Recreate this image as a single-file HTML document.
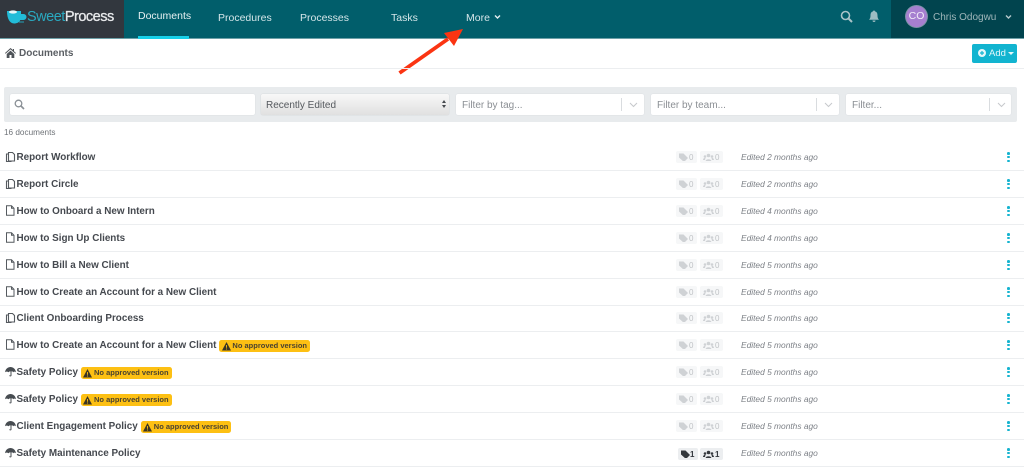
<!DOCTYPE html>
<html><head><meta charset="utf-8"><style>
html,body{margin:0;padding:0;width:1024px;height:470px;overflow:hidden;background:#fff;font-family:"Liberation Sans",sans-serif}
.a{position:absolute;white-space:nowrap}
.nav{top:11px;font-size:10.5px;line-height:14px;color:#d5e6e9}
.box{position:absolute;top:94px;height:21px;background:#fff;border-radius:2px;box-shadow:0 0 1px #c8ced3}
.ph{position:absolute;left:6px;top:5px;font-size:10px;line-height:14px;color:#8b8f94;white-space:nowrap}
.sep{position:absolute;top:4px;width:1px;height:13px;background:#d9dcdf}
.row{position:absolute;left:0;width:1024px;height:1px;background:#eceef0}
.t{position:absolute;left:16.5px;margin-top:1px;font-size:9.9px;line-height:14px;font-weight:bold;color:#45494f;white-space:nowrap}
.ic{position:absolute;left:5px}
.b{display:inline-block;position:relative;vertical-align:0;margin-left:3px;height:11.5px;line-height:11.5px;background:#fdc013;border-radius:2.5px;padding:0 3px 0 13px;font-size:7.5px;font-weight:bold;color:#4a4230}
.b svg{position:absolute;left:2.5px;top:1.5px}
.pill{position:absolute;height:12px;border-radius:2px;background:#f6f7f8;font-size:8px;line-height:12px;color:#c0c3c6}
.p1{left:676px;width:21px}.p2{left:700px;width:23px}
.pill svg{position:absolute;left:2.5px;top:2px}
.p2 svg{left:3px}
.pill span{position:absolute;right:3.5px;top:1px}
.e{position:absolute;left:741px;font-size:8.4px;line-height:12px;font-style:italic;color:#7d8187;white-space:nowrap}
.d{position:absolute;left:1007px;width:3px;height:11px}
.d i{display:block;width:2.6px;height:2.6px;border-radius:50%;background:#16b4d0;margin-bottom:1.2px}
</style></head><body>
<div class="a" style="left:0;top:0;width:1024px;height:38px;background:#015e6b"></div>
<div class="a" style="left:0;top:0;width:124px;height:38px;background:#32373e"></div>
<div class="a" style="left:891px;top:0;width:133px;height:38px;background:#01444e"></div>
<div class="a" style="left:0;top:38px;width:1024px;height:1px;background:#6da0a8"></div>
<svg class="a" style="left:5px;top:8px" width="22" height="18" viewBox="0 0 22 18"><path d="M2 3h14v3h2.500a2.500 2.500 0 0 1 0 6h-3.200C14 14.500 12 15.500 9 15.500 5 15.500 2 11 2 3z" fill="#22bcd8"/><ellipse cx="8" cy="4" rx="4" ry="1.600" fill="#e8f6f8"/><path d="M14 14h5" stroke="#22a3bb" fill="none"/></svg>
<div class="a" style="left:27px;top:8px;font-size:14.5px;line-height:18px;letter-spacing:-.5px;color:#fff"><span style="color:#2aa9c0">Sweet</span><span style="color:#e8eaec;-webkit-text-stroke:.3px #e8eaec">Process</span></div>
<div class="a nav" style="left:138px;top:9px;color:#e6f0f2">Documents</div>
<div class="a" style="left:138px;top:36px;width:51px;height:3px;background:#17d0e8"></div>
<div class="a nav" style="left:218px">Procedures</div>
<div class="a nav" style="left:300px">Processes</div>
<div class="a nav" style="left:391px">Tasks</div>
<div class="a nav" style="left:466px">More</div>
<svg class="a" style="left:493.5px;top:14px" width="7" height="6" viewBox="0 0 7 6"><path d="M1 1.500l2.500 2.500 2.500-2.500" stroke="#e4eef0" stroke-width="1.400" fill="none"/></svg>
<svg class="a" style="left:840px;top:10px" width="13" height="13" viewBox="0 0 13 13"><circle cx="5.500" cy="5.500" r="4" stroke="#a9c3c8" stroke-width="1.600" fill="none"/><path d="M8.500 8.500l3.500 3.500" stroke="#a9c3c8" stroke-width="2"/></svg>
<svg class="a" style="left:868px;top:10px" width="12" height="13" viewBox="0 0 12 13"><path d="M6 .5c.6 0 1 .4 1 .9C9 2 9.500 3.500 9.500 5.500c0 2.500.8 3.500 1.500 4.300H1c.7-.8 1.500-1.800 1.500-4.300C2.500 3.500 3 2 5 1.400c0-.5.400-.9 1-.9zM4.500 10.500h3a1.500 1.500 0 0 1-3 0z" fill="#9dbcc2"/></svg>
<div class="a" style="left:906px;top:6px;width:21px;height:21px;border-radius:50%;background:#a67fd0;color:#f2ecf8;font-size:10.5px;line-height:21px;text-align:center;box-shadow:0 0 0 1px #7f93a8">CO</div>
<div class="a" style="left:933px;top:11px;font-size:10px;line-height:14px;color:#9fb6ba">Chris Odogwu</div>
<svg class="a" style="left:1005px;top:14px" width="7" height="6" viewBox="0 0 7 6"><path d="M1 1.500l2.500 2.500 2.500-2.500" stroke="#b6c9cc" stroke-width="1.400" fill="none"/></svg>

<svg class="a" style="left:398px;top:28px" width="70" height="48" viewBox="0 0 70 48"><path d="M1.500 45L50 11" stroke="#fb3412" stroke-width="3.800" fill="none"/><path d="M65 1L46 5 56 18z" fill="#fb3412"/></svg>

<svg class="a" style="left:5px;top:48px" width="11" height="10" viewBox="0 0 11 10"><path d="M5.500 0L0 5l.6.7L5.500 1.400l4.900 4.300.6-.7-2-1.800V1H8v1zM1.700 6v4h2.800V7h2v3h2.800V6L5.500 2.600z" fill="#4f5459"/></svg>
<div class="a" style="left:19px;top:47px;font-size:10px;line-height:14px;font-weight:bold;color:#5a5e63">Documents</div>
<div class="a" style="left:972px;top:43.5px;width:45px;height:19px;border-radius:2px;background:#12b4d0"></div>
<svg class="a" style="left:978px;top:49px" width="8" height="8" viewBox="0 0 8 8"><circle cx="4" cy="4" r="4" fill="#e6f7fa"/><path d="M4 2v4M2 4h4" stroke="#12b4d0" stroke-width="1.200"/></svg>
<div class="a" style="left:989px;top:46.5px;font-size:9.5px;line-height:14px;color:#e6f7fa">Add</div>
<div class="a" style="left:1008px;top:52px;width:0;height:0;border:3px solid transparent;border-top-color:#e6f7fa;border-bottom:0"></div>
<div class="a" style="left:0;top:68px;width:1024px;height:1px;background:#eceef0"></div>

<div class="a" style="left:4px;top:87px;width:1013px;height:35px;background:#e8ebed;border-radius:2px"></div>
<div class="box" style="left:10px;width:245px"></div>
<svg class="a" style="left:14px;top:99px" width="11" height="11" viewBox="0 0 11 11"><circle cx="4.500" cy="4.500" r="3.300" stroke="#8a9096" stroke-width="1.300" fill="none"/><path d="M7 7l3 3" stroke="#8a9096" stroke-width="1.600"/></svg>
<div class="a" style="left:261px;top:94px;width:188px;height:21px;border-radius:2px;background:linear-gradient(#f8f8f8,#e0e0e0);box-shadow:0 0 1px #b8bcc0"></div>
<div class="a" style="left:266px;top:99px;font-size:10px;line-height:14px;color:#55595e">Recently Edited</div>
<div class="a" style="left:442px;top:100px;width:0;height:0;border:2.5px solid transparent;border-bottom:3px solid #44484d;border-top:0"></div>
<div class="a" style="left:442px;top:105px;width:0;height:0;border:2.5px solid transparent;border-top:3px solid #44484d;border-bottom:0"></div>
<div class="box" style="left:456px;width:188px"><div class="ph">Filter by tag...</div><div class="sep" style="left:165px"></div><svg style="position:absolute;left:173px;top:8px" width="9" height="6"><path d="M1 1l3.500 3.500L8 1" stroke="#c6c9cc" fill="none"/></svg></div>
<div class="box" style="left:651px;width:188px"><div class="ph">Filter by team...</div><div class="sep" style="left:165px"></div><svg style="position:absolute;left:173px;top:8px" width="9" height="6"><path d="M1 1l3.500 3.500L8 1" stroke="#c6c9cc" fill="none"/></svg></div>
<div class="box" style="left:846px;width:165px"><div class="ph">Filter...</div><div class="sep" style="left:143px"></div><svg style="position:absolute;left:151px;top:8px" width="9" height="6"><path d="M1 1l3.500 3.500L8 1" stroke="#c6c9cc" fill="none"/></svg></div>
<div class="a" style="left:4px;top:127px;font-size:8.2px;line-height:12px;color:#6f7378">16 documents</div>

<svg width="0" height="0" style="position:absolute"><defs>
<g id="cp"><path d="M3.500 1.500h4l2 2v6.500h-6zM3.500 3H1.500v7.500h5" stroke="#555a5f" stroke-width="1.100" fill="none"/></g>
<g id="dc"><path d="M1.500.8h5l2.500 2.500v7H1.500zM6.500.8v2.500H9" stroke="#555a5f" stroke-width="1" fill="none"/></g>
<g id="um"><path d="M0 6.200C.5 2.800 3 1 5.500 1S10.500 2.800 11 6.200c-1-.8-2-.8-2.700 0-.5-.6-1-.8-1.800-.8v4.100c0 1-1.600 1.300-2.400.3l.7-.5c.2.300.7.200.7 0V5.400c-.8 0-1.300.2-1.800.8C2 5.400 1 5.400 0 6.200z" fill="#474c51"/></g>
<g id="tg"><path d="M0 .5h4.500L9 5 5 9 0 4.500z"/></g>
<g id="us"><circle cx="5.500" cy="2.500" r="1.800"/><circle cx="2" cy="3.500" r="1.300"/><circle cx="9" cy="3.500" r="1.300"/><path d="M2.500 8.500c0-3 6-3 6 0zM0 7c0-2 2-2.500 2.500-2L2 7zM11 7c0-2-2-2.500-2.500-2L9 7z"/></g>
<g id="wr"><path d="M4.500 0L9 8.500H0z" fill="#3b3524"/><path d="M4.500 3v2.800M4.500 6.500v1" stroke="#fdc013" stroke-width=".9"/></g>
</defs></svg>

<div class="row" style="top:170px"></div><div class="row" style="top:197px"></div><div class="row" style="top:224px"></div><div class="row" style="top:251px"></div><div class="row" style="top:278px"></div><div class="row" style="top:305px"></div><div class="row" style="top:331px"></div><div class="row" style="top:358px"></div><div class="row" style="top:385px"></div><div class="row" style="top:412px"></div><div class="row" style="top:439px"></div><div class="row" style="top:466px"></div>

<svg class="ic" style="top:151px" width="11" height="12"><use href="#cp"/></svg><div class="t" style="top:150px">Report Workflow</div>
<svg class="ic" style="top:178px" width="11" height="12"><use href="#cp"/></svg><div class="t" style="top:177px">Report Circle</div>
<svg class="ic" style="top:205px" width="11" height="12"><use href="#dc"/></svg><div class="t" style="top:204px">How to Onboard a New Intern</div>
<svg class="ic" style="top:232px" width="11" height="12"><use href="#dc"/></svg><div class="t" style="top:231px">How to Sign Up Clients</div>
<svg class="ic" style="top:259px" width="11" height="12"><use href="#dc"/></svg><div class="t" style="top:258px">How to Bill a New Client</div>
<svg class="ic" style="top:286px" width="11" height="12"><use href="#dc"/></svg><div class="t" style="top:285px">How to Create an Account for a New Client</div>
<svg class="ic" style="top:312px" width="11" height="12"><use href="#cp"/></svg><div class="t" style="top:311px">Client Onboarding Process</div>
<svg class="ic" style="top:339px" width="11" height="12"><use href="#dc"/></svg><div class="t" style="top:338px">How to Create an Account for a New Client<span class="b"><svg width="9" height="9"><use href="#wr"/></svg>No approved version</span></div>
<svg class="ic" style="top:366px" width="11" height="12"><use href="#um"/></svg><div class="t" style="top:365px">Safety Policy<span class="b"><svg width="9" height="9"><use href="#wr"/></svg>No approved version</span></div>
<svg class="ic" style="top:393px" width="11" height="12"><use href="#um"/></svg><div class="t" style="top:392px">Safety Policy<span class="b"><svg width="9" height="9"><use href="#wr"/></svg>No approved version</span></div>
<svg class="ic" style="top:420px" width="11" height="12"><use href="#um"/></svg><div class="t" style="top:419px">Client Engagement Policy<span class="b"><svg width="9" height="9"><use href="#wr"/></svg>No approved version</span></div>
<svg class="ic" style="top:447px" width="11" height="12"><use href="#um"/></svg><div class="t" style="top:446px">Safety Maintenance Policy</div>

<div class="pill p1" style="top:151px"><svg width="10" height="8" fill="#cfd2d5"><use href="#tg"/></svg><span>0</span></div><div class="pill p2" style="top:151px"><svg width="11" height="8" fill="#cfd2d5"><use href="#us"/></svg><span>0</span></div><div class="e" style="top:151px">Edited 2 months ago</div><div class="d" style="top:152px"><i></i><i></i><i></i></div>
<div class="pill p1" style="top:178px"><svg width="10" height="8" fill="#cfd2d5"><use href="#tg"/></svg><span>0</span></div><div class="pill p2" style="top:178px"><svg width="11" height="8" fill="#cfd2d5"><use href="#us"/></svg><span>0</span></div><div class="e" style="top:178px">Edited 2 months ago</div><div class="d" style="top:179px"><i></i><i></i><i></i></div>
<div class="pill p1" style="top:205px"><svg width="10" height="8" fill="#cfd2d5"><use href="#tg"/></svg><span>0</span></div><div class="pill p2" style="top:205px"><svg width="11" height="8" fill="#cfd2d5"><use href="#us"/></svg><span>0</span></div><div class="e" style="top:205px">Edited 4 months ago</div><div class="d" style="top:206px"><i></i><i></i><i></i></div>
<div class="pill p1" style="top:232px"><svg width="10" height="8" fill="#cfd2d5"><use href="#tg"/></svg><span>0</span></div><div class="pill p2" style="top:232px"><svg width="11" height="8" fill="#cfd2d5"><use href="#us"/></svg><span>0</span></div><div class="e" style="top:232px">Edited 4 months ago</div><div class="d" style="top:233px"><i></i><i></i><i></i></div>
<div class="pill p1" style="top:259px"><svg width="10" height="8" fill="#cfd2d5"><use href="#tg"/></svg><span>0</span></div><div class="pill p2" style="top:259px"><svg width="11" height="8" fill="#cfd2d5"><use href="#us"/></svg><span>0</span></div><div class="e" style="top:259px">Edited 5 months ago</div><div class="d" style="top:260px"><i></i><i></i><i></i></div>
<div class="pill p1" style="top:286px"><svg width="10" height="8" fill="#cfd2d5"><use href="#tg"/></svg><span>0</span></div><div class="pill p2" style="top:286px"><svg width="11" height="8" fill="#cfd2d5"><use href="#us"/></svg><span>0</span></div><div class="e" style="top:286px">Edited 5 months ago</div><div class="d" style="top:287px"><i></i><i></i><i></i></div>
<div class="pill p1" style="top:312px"><svg width="10" height="8" fill="#cfd2d5"><use href="#tg"/></svg><span>0</span></div><div class="pill p2" style="top:312px"><svg width="11" height="8" fill="#cfd2d5"><use href="#us"/></svg><span>0</span></div><div class="e" style="top:312px">Edited 5 months ago</div><div class="d" style="top:313px"><i></i><i></i><i></i></div>
<div class="pill p1" style="top:339px"><svg width="10" height="8" fill="#cfd2d5"><use href="#tg"/></svg><span>0</span></div><div class="pill p2" style="top:339px"><svg width="11" height="8" fill="#cfd2d5"><use href="#us"/></svg><span>0</span></div><div class="e" style="top:339px">Edited 5 months ago</div><div class="d" style="top:340px"><i></i><i></i><i></i></div>
<div class="pill p1" style="top:366px"><svg width="10" height="8" fill="#cfd2d5"><use href="#tg"/></svg><span>0</span></div><div class="pill p2" style="top:366px"><svg width="11" height="8" fill="#cfd2d5"><use href="#us"/></svg><span>0</span></div><div class="e" style="top:366px">Edited 5 months ago</div><div class="d" style="top:367px"><i></i><i></i><i></i></div>
<div class="pill p1" style="top:393px"><svg width="10" height="8" fill="#cfd2d5"><use href="#tg"/></svg><span>0</span></div><div class="pill p2" style="top:393px"><svg width="11" height="8" fill="#cfd2d5"><use href="#us"/></svg><span>0</span></div><div class="e" style="top:393px">Edited 5 months ago</div><div class="d" style="top:394px"><i></i><i></i><i></i></div>
<div class="pill p1" style="top:420px"><svg width="10" height="8" fill="#cfd2d5"><use href="#tg"/></svg><span>0</span></div><div class="pill p2" style="top:420px"><svg width="11" height="8" fill="#cfd2d5"><use href="#us"/></svg><span>0</span></div><div class="e" style="top:420px">Edited 5 months ago</div><div class="d" style="top:421px"><i></i><i></i><i></i></div>
<div class="pill" style="left:678px;width:20px;top:448px;background:#eceef0;color:#33373c;font-weight:bold"><svg width="10" height="8" fill="#33373c"><use href="#tg"/></svg><span>1</span></div><div class="pill p2" style="top:448px;background:#eceef0;color:#33373c;font-weight:bold"><svg width="11" height="8" fill="#33373c"><use href="#us"/></svg><span>1</span></div><div class="e" style="top:447px">Edited 5 months ago</div><div class="d" style="top:448px"><i></i><i></i><i></i></div>
</body></html>
